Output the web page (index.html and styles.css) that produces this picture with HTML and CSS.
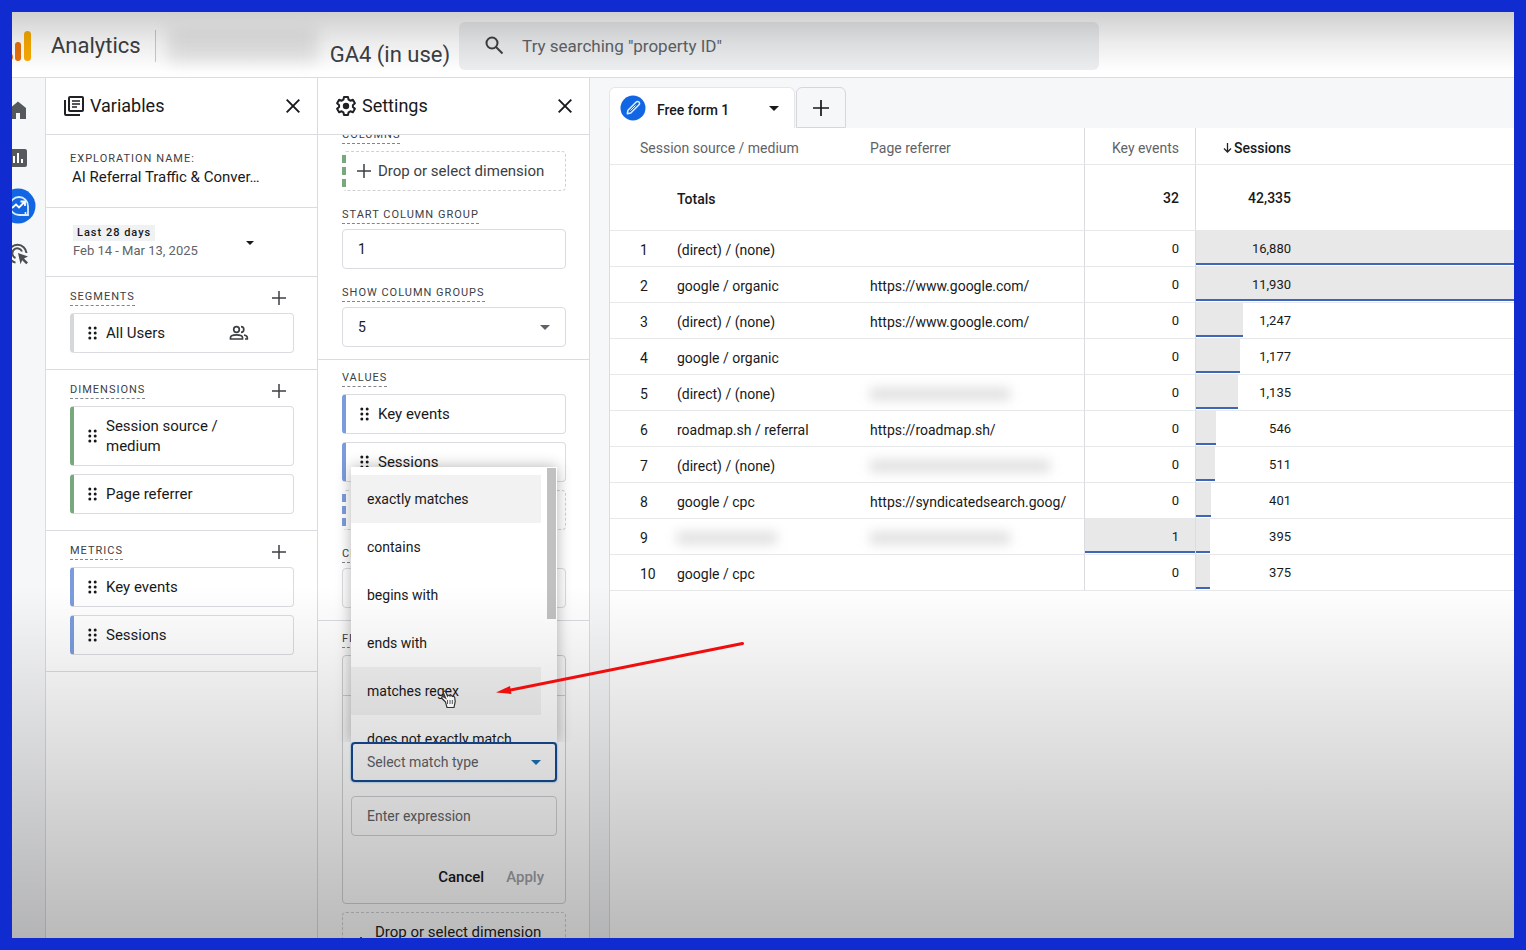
FILE: index.html
```html
<!DOCTYPE html>
<html lang="en">
<head>
<meta charset="utf-8">
<meta name="viewport" content="width=device-width, initial-scale=1">
<title>Analytics</title>
<link rel="stylesheet" href="styles.css">
</head>
<body>
<svg class="defs" aria-hidden="true">
  <symbol id="plus" viewBox="0 0 14 14"><path d="M7 0v14M0 7h14" stroke="currentColor" stroke-width="1.500"/></symbol>
  <symbol id="close" viewBox="0 0 14 14"><path d="M.7.7l12.6 12.6M13.3.7L.7 13.3" stroke="currentColor" stroke-width="1.9"/></symbol>
  <symbol id="drag" viewBox="0 0 9 14"><g fill="currentColor"><circle cx="1.8" cy="2" r="1.5"/><circle cx="7.2" cy="2" r="1.5"/><circle cx="1.8" cy="7" r="1.5"/><circle cx="7.2" cy="7" r="1.5"/><circle cx="1.8" cy="12" r="1.5"/><circle cx="7.2" cy="12" r="1.5"/></g></symbol>
  <symbol id="caret" viewBox="0 0 10 5"><path d="M0 0h10L5 5z" fill="currentColor"/></symbol>
</svg>

<div class="app">
  <header class="topbar">
    <svg class="logo" width="20" height="34" viewBox="0 0 20 34" aria-hidden="true">
      <circle cx="-4" cy="28" r="5" fill="#e8710a"/>
      <rect x="3" y="13" width="6" height="19" rx="3" fill="#e8710a"/>
      <rect x="12" y="2" width="7" height="30" rx="3.5" fill="#f9ab00"/>
    </svg>
    <span class="brand">Analytics</span>
    <span class="divider"></span>
    <span class="redacted account"></span>
    <span class="property">GA4 (in use)</span>
    <label class="search">
      <svg width="19" height="19" viewBox="0 0 19 19" fill="none" stroke="#3c4043" stroke-width="2" role="img" aria-label="Search"><circle cx="7" cy="7" r="5.5"/><path d="M11 11l6.5 6.5"/></svg>
      <input type="search" placeholder="Try searching &quot;property ID&quot;">
    </label>
  </header>

  <div class="workspace">
    <nav class="rail">
      <a href="#home" aria-label="Home"><svg width="24" height="24" viewBox="0 0 24 24"><path d="M4 10v11h6v-6h4v6h6V10l-8-6.500z" fill="#55585c"/></svg></a>
      <a href="#reports" aria-label="Reports"><svg width="24" height="24" viewBox="0 0 24 24"><rect x="3" y="3" width="18" height="18" rx="2" fill="#55585c"/><path d="M8 10v7M12 7v10M16 13v4" stroke="#fff" stroke-width="2"/></svg></a>
      <a href="#explore" aria-label="Explore"><svg width="36" height="36" viewBox="0 0 36 36"><circle cx="18" cy="18" r="17.500" fill="#1266e3"/><path d="M19 9a9 9 0 1 0 0 18h9v-9a9 9 0 0 0-9-9z" fill="none" stroke="#d9edff" stroke-width="1.800"/><path d="M12 20l4-3.500 3 3 5.500-5.500M20.500 13.500H25V18" fill="none" stroke="#fff" stroke-width="1.800"/><circle cx="25.500" cy="25" r="1" fill="#fff"/></svg></a>
      <a href="#advertising" aria-label="Advertising"><svg width="24" height="24" viewBox="0 0 24 24" fill="none" stroke="#4b4e52" stroke-width="2"><path d="M20.500 11a9 9 0 1 0-11 9.600M16 9.500a5 5 0 1 0-6.500 6.500"/><path d="M12 11l10 3.500-4 2 4 4-1.800 1.800-4-4-1.700 4z" fill="#4b4e52" stroke="none"/></svg></a>
    </nav>

    <aside class="panel">
      <div class="panel-head">
        <svg width="20" height="20" viewBox="0 0 20 20" fill="none" stroke="#202124" stroke-width="2" aria-hidden="true"><rect x="5" y="1" width="14" height="14" rx="1"/><path d="M1 4v14a1 1 0 0 0 1 1h14"/><path d="M8 5h8M8 8h8M8 11h5" stroke-width="1.600"/></svg>
        <h2>Variables</h2>
        <button class="icon-btn" aria-label="Close variables"><svg width="14" height="14"><use href="#close"/></svg></button>
      </div>
      <section class="block name-block">
        <div class="caps">Exploration name:</div>
        <div class="exploration">AI Referral Traffic &amp; Conver…</div>
      </section>
      <section class="block date-block">
        <button class="date">
          <span class="date-text"><span class="preset">Last 28 days</span><span class="range">Feb 14 - Mar 13, 2025</span></span>
          <svg width="8" height="4"><use href="#caret"/></svg>
        </button>
      </section>
      <section class="block">
        <div class="row"><span class="caps dashed">Segments</span><button class="icon-btn" aria-label="Add segment"><svg width="14" height="14"><use href="#plus"/></svg></button></div>
        <div class="chips">
          <div class="chip grey"><svg width="9" height="14"><use href="#drag"/></svg><span>All Users</span>
            <svg class="people" width="20" height="16" viewBox="0 0 20 16" fill="none" stroke="#3c4043" stroke-width="1.700" aria-hidden="true"><circle cx="7.500" cy="4.500" r="2.800"/><path d="M1.500 14v-1.500c0-1.700 3-2.700 6-2.700s6 1 6 2.700V14zM12 1.700a2.800 2.800 0 0 1 0 5.600M15 10c2 .5 3.300 1.300 3.300 2.500V14H16"/></svg>
          </div>
        </div>
      </section>
      <section class="block">
        <div class="row"><span class="caps dashed">Dimensions</span><button class="icon-btn" aria-label="Add dimension"><svg width="14" height="14"><use href="#plus"/></svg></button></div>
        <div class="chips">
          <div class="chip green"><svg width="9" height="14"><use href="#drag"/></svg><span>Session source / medium</span></div>
          <div class="chip green"><svg width="9" height="14"><use href="#drag"/></svg><span>Page referrer</span></div>
        </div>
      </section>
      <section class="block">
        <div class="row"><span class="caps dashed">Metrics</span><button class="icon-btn" aria-label="Add metric"><svg width="14" height="14"><use href="#plus"/></svg></button></div>
        <div class="chips">
          <div class="chip blue"><svg width="9" height="14"><use href="#drag"/></svg><span>Key events</span></div>
          <div class="chip blue"><svg width="9" height="14"><use href="#drag"/></svg><span>Sessions</span></div>
        </div>
      </section>
    </aside>

    <aside class="panel settings">
      <div class="panel-head">
        <svg width="20" height="20" viewBox="0 0 20 20" aria-hidden="true"><path d="M8 1h4l.6 2.700 1.700 1 2.600-.9 2 3.400-2 1.900v1.800l2 1.900-2 3.400-2.600-.9-1.700 1L12 19H8l-.6-2.700-1.700-1-2.600.9-2-3.400 2-1.900V9.100l-2-1.900 2-3.400 2.600.9 1.700-1z" fill="none" stroke="#202124" stroke-width="2" stroke-linejoin="round"/><circle cx="10" cy="10" r="3.200" fill="#202124"/></svg>
        <h2>Settings</h2>
        <button class="icon-btn" aria-label="Close settings"><svg width="14" height="14"><use href="#close"/></svg></button>
      </div>
      <div class="settings-body">
        <section class="block scrolled">
          <div class="row"><span class="caps dashed">Columns</span></div>
          <div class="chips"><button class="drop green"><svg width="14" height="14"><use href="#plus"/></svg>Drop or select dimension</button></div>
          <div class="field">
            <label class="row" for="start"><span class="caps dashed">Start column group</span></label>
            <input class="box" id="start" type="text" value="1">
          </div>
          <div class="field">
            <label class="row" for="groups"><span class="caps dashed">Show column groups</span></label>
            <div class="select-wrap"><select class="box" id="groups"><option>5</option></select><svg width="10" height="5"><use href="#caret"/></svg></div>
          </div>
        </section>
        <section class="block">
          <div class="row"><span class="caps dashed">Values</span></div>
          <div class="chips">
            <div class="chip blue"><svg width="9" height="14"><use href="#drag"/></svg><span>Key events</span></div>
            <div class="chip blue"><svg width="9" height="14"><use href="#drag"/></svg><span>Sessions</span></div>
            <button class="drop blue" aria-label="Add value"></button>
          </div>
          <div class="field">
            <label class="row" for="cell"><span class="caps dashed">Cell type</span></label>
            <select class="box" id="cell"></select>
          </div>
        </section>
        <section class="block">
          <div class="row"><span class="caps dashed">Filters</span></div>
          <div class="chips">
            <div class="filter">
              <div class="filter-head"></div>
              <div class="filter-body">
                <div class="select-wrap match">
                  <select class="box" aria-label="Match type"><option>Select match type</option></select><svg width="10" height="5"><use href="#caret"/></svg>
                  <div class="menu">
                    <ul role="listbox" aria-label="Match type options">
                      <li class="selected" role="option">exactly matches</li>
                      <li role="option">contains</li>
                      <li role="option">begins with</li>
                      <li role="option">ends with</li>
                      <li class="hover" role="option">matches regex</li>
                      <li role="option">does not exactly match</li>
                    </ul>
                    <span class="thumb"></span>
                  </div>
                </div>
                <input class="box" type="text" placeholder="Enter expression" aria-label="Enter expression">
                <div class="actions"><button>Cancel</button><button disabled>Apply</button></div>
              </div>
            </div>
            <button class="drop plain"><svg width="14" height="14"><use href="#plus"/></svg>Drop or select dimension</button>
          </div>
        </section>
      </div>
    </aside>

    <main class="canvas">
      <div class="tabs">
        <button class="tab">
          <svg width="26" height="26" viewBox="0 0 26 26" aria-hidden="true"><circle cx="13" cy="13" r="12.500" fill="#1266e3"/><path d="M7.300 18.700l.7-3.500 8.200-8.200a1.900 1.900 0 0 1 2.800 2.800l-8.200 8.200z" fill="none" stroke="#d9f1ff" stroke-width="1.500" stroke-linejoin="round"/><path d="M10.500 15.500l5-5" stroke="#d9f1ff" stroke-width="1"/></svg>
          <span class="tab-label">Free form 1</span>
          <svg class="tab-caret" width="10" height="5"><use href="#caret"/></svg>
        </button>
        <button class="tab add" aria-label="Add tab"><svg width="16" height="16"><use href="#plus"/></svg></button>
      </div>
      <div class="sheet">
        <table>
          <colgroup><col class="c-index"><col class="c-source"><col class="c-ref"><col class="c-key"><col></colgroup>
          <thead>
            <tr><th colspan="2" class="first">Session source / medium</th><th>Page referrer</th><th class="num">Key events</th><th class="sess sorted"><span><svg width="9" height="10" viewBox="0 0 9 10" aria-hidden="true"><path d="M4.500 0v9M1 5.500L4.500 9 8 5.500" fill="none" stroke="#202124" stroke-width="1.300"/></svg>Sessions</span></th></tr>
          </thead>
          <tbody>
            <tr class="totals"><td></td><td>Totals</td><td></td><td class="num">32</td><td class="sess"><span>42,335</span></td></tr>
            <tr><td class="first">1</td><td>(direct) / (none)</td><td></td><td class="num">0</td><td class="sess"><i class="bar" style="width:100%"></i><span>16,880</span></td></tr>
            <tr><td class="first">2</td><td>google / organic</td><td>https://www.google.com/</td><td class="num">0</td><td class="sess"><i class="bar" style="width:100%"></i><span>11,930</span></td></tr>
            <tr><td class="first">3</td><td>(direct) / (none)</td><td>https://www.google.com/</td><td class="num">0</td><td class="sess"><i class="bar" style="width:47px"></i><span>1,247</span></td></tr>
            <tr><td class="first">4</td><td>google / organic</td><td></td><td class="num">0</td><td class="sess"><i class="bar" style="width:44px"></i><span>1,177</span></td></tr>
            <tr><td class="first">5</td><td>(direct) / (none)</td><td><span class="redacted medium"></span></td><td class="num">0</td><td class="sess"><i class="bar" style="width:42px"></i><span>1,135</span></td></tr>
            <tr><td class="first">6</td><td>roadmap.sh / referral</td><td>https://roadmap.sh/</td><td class="num">0</td><td class="sess"><i class="bar" style="width:20px"></i><span>546</span></td></tr>
            <tr><td class="first">7</td><td>(direct) / (none)</td><td><span class="redacted long"></span></td><td class="num">0</td><td class="sess"><i class="bar" style="width:19px"></i><span>511</span></td></tr>
            <tr><td class="first">8</td><td>google / cpc</td><td>https://syndicatedsearch.goog/</td><td class="num">0</td><td class="sess"><i class="bar" style="width:15px"></i><span>401</span></td></tr>
            <tr><td class="first">9</td><td><span class="redacted short"></span></td><td><span class="redacted medium"></span></td><td class="num"><i class="bar" style="width:100%"></i><span>1</span></td><td class="sess"><i class="bar" style="width:14px"></i><span>395</span></td></tr>
            <tr><td class="first">10</td><td>google / cpc</td><td></td><td class="num">0</td><td class="sess"><i class="bar" style="width:14px"></i><span>375</span></td></tr>
          </tbody>
        </table>
      </div>
    </main>
  </div>
  <div class="shade"></div>
  <svg class="annotation" width="320" height="80" viewBox="440 640 320 80" aria-hidden="true">
    <path d="M742.500 643.500L508 690.500" stroke="#f00d0d" stroke-width="3" stroke-linecap="round"/>
    <path d="M496 692.500l14-6.500 1.500 8z" fill="#f00d0d"/>
    <path d="M445.500 702l-3.500-3.500c-1-1.500.5-2.500 2-1.500l1.500 1-2-5c-.5-2 1.500-2.500 2.200-1l1.800 4c.5-1 2-1 2.500 0 1-.8 2-.5 2.500.5 1-.5 2 0 2.200 1l.5 4-1.200 6h-7z" fill="#f4f4f4" stroke="#333" stroke-width="1.200"/>
    <path d="M447.500 700v4M450 700v4M452.300 700v4" stroke="#444" stroke-width=".9"/>
  </svg>
</div>
</body>
</html>
```
FILE: styles.css
```css
* { box-sizing: border-box; }

body {
  margin: 0;
  height: 100vh;
  border: 12px solid #102bd0;
  overflow: hidden;
  font: 14px/20px Roboto, "Liberation Sans", sans-serif;
  color: #18191b;
}

button, input, select { font: inherit; color: inherit; margin: 0; }
button { border: 0; background: none; padding: 0; cursor: pointer; }
svg { display: block; flex: none; }
.defs { position: absolute; width: 0; height: 0; }

.app {
  position: relative;
  height: 100%;
  display: flex;
  flex-direction: column;
  overflow: hidden;
  background: #fff;
}

/* Top bar */
.topbar {
  display: flex;
  align-items: center;
  flex: none;
  height: 66px;
  padding-top: 2px;
  border-bottom: 1px solid #dadce0;
}
.brand { margin-left: 19px; font-size: 22px; line-height: 28px; color: #3c4043; }
.divider { width: 1px; height: 32px; margin-left: 14px; background: #c8cacc; }
.account { width: 150px; height: 34px; margin: 0 12px; }
.property { align-self: flex-end; padding-bottom: 8px; font-size: 22px; line-height: 28px; color: #3c4043; white-space: nowrap; }
.search {
  display: flex;
  align-items: center;
  gap: 18px;
  flex: 0 1 640px;
  height: 48px;
  margin-left: 9px;
  padding: 0 26px;
  border-radius: 6px;
  background: #eceef0;
}
.search input { flex: 1; min-width: 0; border: 0; padding: 0; background: none; font-size: 17px; outline: 0; }
.search input::placeholder { color: #5f6368; opacity: 1; }

.redacted { display: block; filter: blur(8px); background: #e6e6e6; }
td .redacted { height: 12px; background: #dedede; filter: blur(6px); }
.short { width: 100px; }
.medium { width: 140px; }
.long { width: 180px; }

/* Layout */
.workspace { flex: 1; min-height: 0; display: flex; }

.rail {
  flex: none;
  width: 46px;
  margin-left: -12px;
  padding-top: 8px;
  background: #f6f7f9;
  border-right: 1px solid #dadce0;
}
.rail a { display: flex; align-items: center; justify-content: center; width: 36px; height: 48px; }

.panel {
  flex: none;
  width: 272px;
  display: flex;
  flex-direction: column;
  border-right: 1px solid #dadce0;
}
.panel-head {
  display: flex;
  align-items: center;
  flex: none;
  gap: 6px;
  height: 57px;
  padding: 0 17px 0 18px;
  border-bottom: 1px solid #dadce0;
}
.panel-head h2 { flex: 1; margin: 0; font-size: 18px; line-height: 24px; font-weight: 400; }

.block { padding: 8px 23px 16px 24px; border-bottom: 1px solid #dadce0; }
.row { display: flex; align-items: center; justify-content: space-between; height: 24px; padding: 1px 8px 0 0; color: #3c4043; }
.caps { font-size: 11px; line-height: 16px; letter-spacing: 1px; text-transform: uppercase; color: #3c4043; }
.dashed { border-bottom: 1px dashed #80868b; }
.chips { display: flex; flex-direction: column; gap: 8px; margin-top: 4px; }

.name-block { padding-top: 16px; padding-bottom: 20px; }
.exploration { padding-left: 2px; font-size: 15px; white-space: nowrap; }
.date-block { padding: 17px 63px 15px 27px; }
.date { display: flex; align-items: center; justify-content: space-between; width: 100%; text-align: left; }
.date-text { display: flex; flex-direction: column; align-items: flex-start; }
.preset { padding: 0 4px; font-size: 11px; line-height: 16px; font-weight: 500; letter-spacing: 1px; background: #eff1f3; }
.range { color: #5f6368; font-size: 13px; }

.chip {
  display: flex;
  align-items: center;
  gap: 9px;
  min-height: 40px;
  padding: 9px 44px 9px 14px;
  border: 1px solid #dadce0;
  border-left-width: 4px;
  border-radius: 4px;
  font-size: 15px;
}
.grey { border-left-color: #d5d7d9; }
.chip.green, .drop.green { border-left-color: #77a97c; }
.chip.blue, .drop.blue { border-left-color: #7b9cdc; }
.people { margin-left: auto; }

/* Settings */
.settings-body { flex: 1; min-height: 0; overflow: hidden; }
.settings .block { padding-top: 6px; padding-bottom: 12px; }
.settings .scrolled { margin-top: -18px; }
.drop {
  display: flex;
  align-items: center;
  gap: 7px;
  height: 40px;
  padding: 0 11px;
  border: 1px dashed #cfd1d4;
  border-left: 4px dashed;
  border-radius: 4px;
  color: #3c4043;
  font-size: 15px;
  white-space: nowrap;
}
.drop.plain { border-left: 1px dashed #cfd1d4; color: #202124; }
.drop.plain svg { align-self: flex-end; }
.field { margin-top: 12px; }
.box {
  display: block;
  width: 100%;
  height: 40px;
  margin-top: 2px;
  padding: 0 15px;
  border: 1px solid #dadce0;
  border-radius: 4px;
  background: transparent;
  appearance: none;
  outline: 0;
}
.box::placeholder { color: #5f6368; opacity: 1; }
.select-wrap { position: relative; color: #5f6368; }
.select-wrap > svg { position: absolute; right: 16px; top: 18px; pointer-events: none; }
.select-wrap .box { color: #202124; }

.filter { border: 1px solid #d0d2d5; border-radius: 4px; }
.filter-head { height: 40px; border-bottom: 1px solid #d0d2d5; }
.filter-body { display: flex; flex-direction: column; gap: 14px; padding: 46px 8px 8px; }
.filter-body .box { margin: 0; border-color: #d0d2d5; }
.match { color: #1a73b8; }
.filter-body .match .box { border: 2px solid #164a94; padding: 0 14px; color: #5f6368; box-shadow: 0 0 2px #4aa3e0; }
.actions { display: flex; justify-content: flex-end; gap: 22px; padding: 9px 13px 0 0; }
.actions button { height: 36px; font-size: 15px; font-weight: 500; }
.actions button:disabled { color: #a0a2a5; }

.menu {
  position: absolute;
  left: 0;
  right: 0;
  bottom: 100%;
  height: 275px;
  overflow: hidden;
  padding-top: 8px;
  background: #fff;
  box-shadow: 0 0 14px rgba(0, 0, 0, .3);
  clip-path: inset(-20px -20px 0);
}
.menu ul { margin: 0 16px 0 0; padding: 0; list-style: none; color: #18191b; }
.menu li { padding: 14px 16px; height: 48px; }
.menu .selected { background: #f2f2f2; }
.menu .hover { background: #f3f3f3; }
.thumb { position: absolute; top: 1px; right: 1px; width: 9px; height: 151px; background: #c1c1c1; }

/* Report */
.canvas { flex: 1; min-width: 0; display: flex; flex-direction: column; padding: 9px 0 0 19px; background: #f6f7f9; }
.tabs { display: flex; gap: 1px; flex: none; }
.tab {
  display: flex;
  align-items: center;
  gap: 11px;
  width: 186px;
  height: 41px;
  padding: 0 15px 0 10px;
  border: 1px solid #e4e6e9;
  border-bottom: 0;
  border-radius: 6px 6px 0 0;
  background: #fff;
  font-weight: 500;
}
.tab-label { padding-top: 3px; }
.tab-caret { margin-left: auto; }
.tab.add { justify-content: center; width: 50px; padding: 0; background: #f6f7f9; border: 1px solid #d5d7da; }
.sheet { flex: 1; min-height: 0; background: #fff; border-left: 1px solid #dadce0; }

table { width: 100%; table-layout: fixed; border-collapse: separate; border-spacing: 0; }
.c-index { width: 67px; }
.c-source { width: 193px; }
.c-ref { width: 214px; }
.c-key { width: 112px; }
th, td { position: relative; height: 36px; padding: 2px 0 0; border-bottom: 1px solid #e6e8ea; text-align: left; white-space: nowrap; }
th { height: 37px; padding-top: 3px; font-weight: 400; color: #5f6368; }
.totals td { height: 66px; font-weight: 500; }
.first { padding-left: 30px; }
.num { padding-right: 16px; text-align: right; border-left: 1px solid #dadce0; border-right: 1px solid #dadce0; }
td.num, td.sess { padding-top: 0; font-size: 13px; }
.totals td.num, .totals td.sess { font-size: 14px; }
thead .sess { color: #18191b; font-weight: 500; }
.sess > span { position: relative; display: flex; justify-content: flex-end; align-items: center; gap: 2px; width: 95px; }
.num > span { position: relative; }
.bar { position: absolute; left: 0; top: 0; bottom: 1px; background: #e8e8e8; border-bottom: 2px solid #3f66b4; }

/* Overlays */
.shade {
  position: absolute;
  inset: 0;
  pointer-events: none;
  background:
    linear-gradient(rgba(0, 0, 0, .19), rgba(0, 0, 0, .07) 32px, transparent 60px),
    linear-gradient(transparent 62%, rgba(0, 0, 0, .09) 74%, rgba(0, 0, 0, .27));
}
.annotation { position: absolute; left: 428px; top: 628px; pointer-events: none; }
```
